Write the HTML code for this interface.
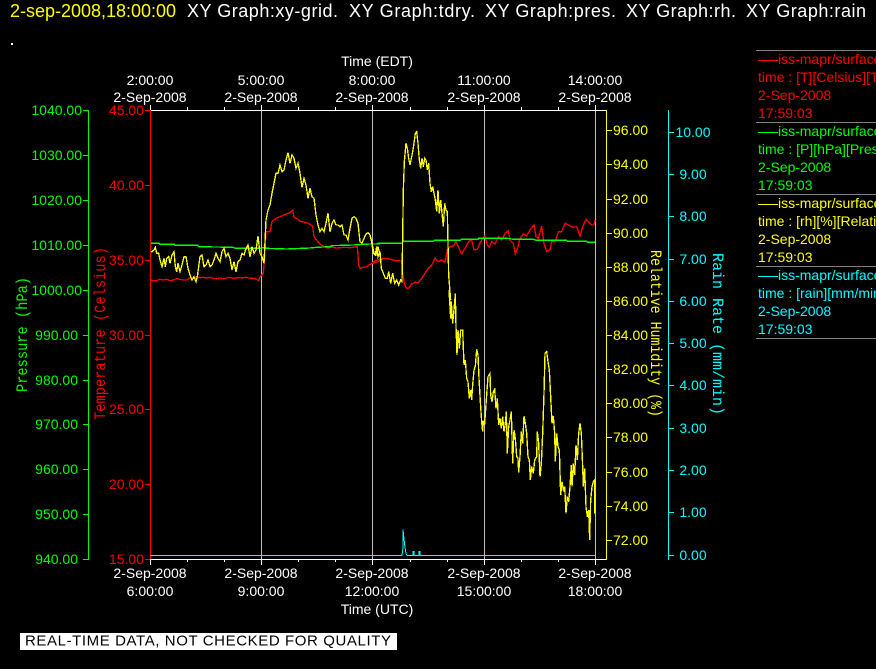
<!DOCTYPE html>
<html>
<head>
<meta charset="utf-8">
<style>
html,body{margin:0;padding:0;background:#000;width:876px;height:669px;overflow:hidden}
svg{display:block;position:absolute;left:0;top:0}
text{font-family:"Liberation Sans",sans-serif;font-size:14px}
.m{text-anchor:middle}.e{text-anchor:end}
.mono{font-family:"Liberation Mono",monospace;font-size:16px}
line,rect{shape-rendering:crispEdges}
polyline{shape-rendering:crispEdges;fill:none}
</style>
</head>
<body>
<svg width="876" height="669" viewBox="0 0 876 669" xmlns="http://www.w3.org/2000/svg">
<rect width="876" height="669" fill="#000"/>

<!-- title -->
<g>
<text x="10" y="17" fill="#ffff00" style="font-size:18px" textLength="166">2-sep-2008,18:00:00</text>
<text x="187" y="17" fill="#fff" style="font-size:18px" textLength="151">XY Graph:xy-grid.</text>
<text x="349" y="17" fill="#fff" style="font-size:18px" textLength="126">XY Graph:tdry.</text>
<text x="485" y="17" fill="#fff" style="font-size:18px" textLength="131">XY Graph:pres.</text>
<text x="626" y="17" fill="#fff" style="font-size:18px" textLength="110">XY Graph:rh.</text>
<text x="746" y="17" fill="#fff" style="font-size:18px" textLength="120">XY Graph:rain</text>
</g>
<rect x="11" y="43" width="2" height="2" fill="#fff"/>

<!-- grid -->
<g stroke="#c0c0c0" stroke-width="1">
<line x1="261.5" y1="110" x2="261.5" y2="559"/>
<line x1="372.5" y1="110" x2="372.5" y2="559"/>
<line x1="484.5" y1="110" x2="484.5" y2="559"/>
<line x1="595.5" y1="110" x2="595.5" y2="559"/>
</g>

<!-- white frame and time ticks -->
<g stroke="#fff" stroke-width="1">
<line x1="150" y1="110.5" x2="606" y2="110.5"/>
<line x1="150" y1="559.5" x2="606" y2="559.5"/>
<line x1="150.5" y1="105" x2="150.5" y2="110"/><line x1="187.5" y1="107" x2="187.5" y2="110"/><line x1="224.5" y1="107" x2="224.5" y2="110"/>
<line x1="261.5" y1="105" x2="261.5" y2="110"/><line x1="298.5" y1="107" x2="298.5" y2="110"/><line x1="335.5" y1="107" x2="335.5" y2="110"/>
<line x1="372.5" y1="105" x2="372.5" y2="110"/><line x1="410.5" y1="107" x2="410.5" y2="110"/><line x1="447.5" y1="107" x2="447.5" y2="110"/>
<line x1="484.5" y1="105" x2="484.5" y2="110"/><line x1="521.5" y1="107" x2="521.5" y2="110"/><line x1="558.5" y1="107" x2="558.5" y2="110"/>
<line x1="595.5" y1="105" x2="595.5" y2="110"/>
<line x1="150.5" y1="560" x2="150.5" y2="565"/><line x1="187.5" y1="560" x2="187.5" y2="562"/><line x1="224.5" y1="560" x2="224.5" y2="562"/>
<line x1="261.5" y1="560" x2="261.5" y2="565"/><line x1="298.5" y1="560" x2="298.5" y2="562"/><line x1="335.5" y1="560" x2="335.5" y2="562"/>
<line x1="372.5" y1="560" x2="372.5" y2="565"/><line x1="410.5" y1="560" x2="410.5" y2="562"/><line x1="447.5" y1="560" x2="447.5" y2="562"/>
<line x1="484.5" y1="560" x2="484.5" y2="565"/><line x1="521.5" y1="560" x2="521.5" y2="562"/><line x1="558.5" y1="560" x2="558.5" y2="562"/>
<line x1="595.5" y1="560" x2="595.5" y2="565"/>
</g>

<!-- time labels -->
<g fill="#fff">
<text class="m" x="377" y="66">Time (EDT)</text>
<text class="m" x="150" y="85">2:00:00</text><text class="m" x="261" y="85">5:00:00</text><text class="m" x="372" y="85">8:00:00</text><text class="m" x="484" y="85">11:00:00</text><text class="m" x="595" y="85">14:00:00</text>
<text class="m" x="150" y="102">2-Sep-2008</text><text class="m" x="261" y="102">2-Sep-2008</text><text class="m" x="372" y="102">2-Sep-2008</text><text class="m" x="484" y="102">2-Sep-2008</text><text class="m" x="595" y="102">2-Sep-2008</text>
<text class="m" x="150" y="578">2-Sep-2008</text><text class="m" x="261" y="578">2-Sep-2008</text><text class="m" x="372" y="578">2-Sep-2008</text><text class="m" x="484" y="578">2-Sep-2008</text><text class="m" x="595" y="578">2-Sep-2008</text>
<text class="m" x="150" y="596">6:00:00</text><text class="m" x="261" y="596">9:00:00</text><text class="m" x="372" y="596">12:00:00</text><text class="m" x="484" y="596">15:00:00</text><text class="m" x="595" y="596">18:00:00</text>
<text class="m" x="377" y="614">Time (UTC)</text>
</g>

<!-- green axis -->
<g stroke="#00ff00" stroke-width="1">
<line x1="88.5" y1="110" x2="88.5" y2="560"/>
<line x1="83" y1="110.5" x2="88" y2="110.5"/><line x1="83" y1="155.5" x2="88" y2="155.5"/><line x1="83" y1="200.5" x2="88" y2="200.5"/><line x1="83" y1="245.5" x2="88" y2="245.5"/><line x1="83" y1="290.5" x2="88" y2="290.5"/><line x1="83" y1="335.5" x2="88" y2="335.5"/><line x1="83" y1="380.5" x2="88" y2="380.5"/><line x1="83" y1="424.5" x2="88" y2="424.5"/><line x1="83" y1="469.5" x2="88" y2="469.5"/><line x1="83" y1="514.5" x2="88" y2="514.5"/><line x1="83" y1="559.5" x2="88" y2="559.5"/>
</g>
<g fill="#00ff00">
<text class="e" x="82" y="115">1040.00</text><text class="e" x="82" y="160">1030.00</text><text class="e" x="82" y="205">1020.00</text><text class="e" x="82" y="250">1010.00</text><text class="e" x="82" y="295">1000.00</text><text class="e" x="78" y="340">990.00</text><text class="e" x="78" y="385">980.00</text><text class="e" x="78" y="429">970.00</text><text class="e" x="78" y="474">960.00</text><text class="e" x="78" y="519">950.00</text><text class="e" x="78" y="564">940.00</text>
<text class="mono" transform="translate(27 392) rotate(-90)" textLength="115" lengthAdjust="spacingAndGlyphs">Pressure (hPa)</text>
</g>

<!-- red axis -->
<g stroke="#ff0000" stroke-width="1">
<line x1="150.5" y1="110" x2="150.5" y2="559"/>
<line x1="145" y1="110.5" x2="150" y2="110.5"/><line x1="145" y1="185.5" x2="150" y2="185.5"/><line x1="145" y1="260.5" x2="150" y2="260.5"/><line x1="145" y1="335.5" x2="150" y2="335.5"/><line x1="145" y1="409.5" x2="150" y2="409.5"/><line x1="145" y1="484.5" x2="150" y2="484.5"/><line x1="145" y1="559.5" x2="150" y2="559.5"/>
</g>
<g fill="#ff0000">
<text class="e" x="144" y="115">45.00</text><text class="e" x="144" y="190">40.00</text><text class="e" x="144" y="265">35.00</text><text class="e" x="144" y="340">30.00</text><text class="e" x="144" y="414">25.00</text><text class="e" x="144" y="489">20.00</text><text class="e" x="144" y="564">15.00</text>
<text class="mono" transform="translate(105 420) rotate(-90)" textLength="173" lengthAdjust="spacingAndGlyphs">Temperature (Celsius)</text>
</g>

<!-- yellow axis -->
<g stroke="#ffff00" stroke-width="1">
<line x1="606.5" y1="110" x2="606.5" y2="560"/>
<line x1="607" y1="130.5" x2="612" y2="130.5"/><line x1="607" y1="164.5" x2="612" y2="164.5"/><line x1="607" y1="199.5" x2="612" y2="199.5"/><line x1="607" y1="233.5" x2="612" y2="233.5"/><line x1="607" y1="267.5" x2="612" y2="267.5"/><line x1="607" y1="301.5" x2="612" y2="301.5"/><line x1="607" y1="335.5" x2="612" y2="335.5"/><line x1="607" y1="369.5" x2="612" y2="369.5"/><line x1="607" y1="403.5" x2="612" y2="403.5"/><line x1="607" y1="437.5" x2="612" y2="437.5"/><line x1="607" y1="472.5" x2="612" y2="472.5"/><line x1="607" y1="506.5" x2="612" y2="506.5"/><line x1="607" y1="540.5" x2="612" y2="540.5"/>
</g>
<g fill="#ffff00">
<text x="613" y="135">96.00</text><text x="613" y="169">94.00</text><text x="613" y="204">92.00</text><text x="613" y="238">90.00</text><text x="613" y="272">88.00</text><text x="613" y="306">86.00</text><text x="613" y="340">84.00</text><text x="613" y="374">82.00</text><text x="613" y="408">80.00</text><text x="613" y="442">78.00</text><text x="613" y="477">76.00</text><text x="613" y="511">74.00</text><text x="613" y="545">72.00</text>
<text class="mono" transform="translate(651 250) rotate(90)" textLength="167" lengthAdjust="spacingAndGlyphs">Relative Humidity (%)</text>
</g>

<!-- cyan axis -->
<g stroke="#00ffff" stroke-width="1">
<line x1="668.5" y1="110" x2="668.5" y2="560"/>
<line x1="669" y1="132.5" x2="674" y2="132.5"/><line x1="669" y1="174.5" x2="674" y2="174.5"/><line x1="669" y1="216.5" x2="674" y2="216.5"/><line x1="669" y1="259.5" x2="674" y2="259.5"/><line x1="669" y1="301.5" x2="674" y2="301.5"/><line x1="669" y1="343.5" x2="674" y2="343.5"/><line x1="669" y1="385.5" x2="674" y2="385.5"/><line x1="669" y1="428.5" x2="674" y2="428.5"/><line x1="669" y1="470.5" x2="674" y2="470.5"/><line x1="669" y1="512.5" x2="674" y2="512.5"/><line x1="669" y1="555.5" x2="674" y2="555.5"/>
</g>
<g fill="#00ffff">
<text class="m" x="693" y="137">10.00</text><text class="m" x="693" y="179">9.00</text><text class="m" x="693" y="221">8.00</text><text class="m" x="693" y="264">7.00</text><text class="m" x="693" y="306">6.00</text><text class="m" x="693" y="348">5.00</text><text class="m" x="693" y="390">4.00</text><text class="m" x="693" y="433">3.00</text><text class="m" x="693" y="475">2.00</text><text class="m" x="693" y="517">1.00</text><text class="m" x="693" y="560">0.00</text>
<text class="mono" transform="translate(713 253) rotate(90)" textLength="162" lengthAdjust="spacingAndGlyphs">Rain Rate (mm/min)</text>
</g>

<!-- red series -->
<polyline stroke="#ff0000" stroke-width="4" transform="translate(150 110) scale(.33333)" points="3,510 10,513 20,512 30,508 40,510 50,508 60,512 70,510 80,506 90,508 100,510 110,510 120,503 130,505 140,500 150,503 160,502 170,504 180,502 190,505 200,506 210,504 220,506 230,504 240,502 250,505 260,503 270,504 280,503 290,502 300,505 310,505 320,508 326,512 330,500 340,490 344,440 348,365 360,365 366,335 378,325 390,320 400,315 410,312 420,308 428,300 432,322 445,328 450,334 462,336 475,340 488,348 492,380 500,390 510,402 520,408 530,414 545,412 560,414 580,412 600,413 622,410 626,465 630,475 640,472 650,470 660,463 675,458 690,452"/>
<polyline stroke="#ff0000" stroke-width="4" transform="translate(370 110) scale(.33333)" points="0,465 10,455 30,447 45,445 60,447 75,452 95,453 98,490 104,525 110,535 115,535 125,522 135,517 145,518 155,505 165,490 175,475 185,465 195,445 205,455 215,450 225,457 232,420 240,410 250,408 258,395 265,410 275,432 285,415 295,395 305,390 312,420 322,418 332,395 345,377 352,405 358,412 365,395 375,402 385,380 395,390 405,370 415,362 420,390 430,400 436,432 444,410 450,385 460,372 470,378 480,360 492,345 498,380 505,385 515,348 522,400 530,425 540,420 545,395 555,395 565,365 575,365 585,340 595,345 610,352 620,350 630,378 638,350 648,328 655,335 665,345 672,345 675,330"/>

<!-- green series -->
<polyline stroke="#00ff00" stroke-width="4" transform="translate(150 110) scale(.33333)" points="3,400 28,400 30,403 72,403 75,406 143,406 146,410 250,412 255,415 330,415 345,412 350,415 410,417 480,414 500,412 540,410 545,407 610,405 660,402 690,402"/>
<polyline stroke="#00ff00" stroke-width="4" transform="translate(370 110) scale(.33333)" points="0,402 20,402 24,400 96,400 100,394 190,394 193,391 270,391 274,388 324,388 326,385 412,385 430,388 490,388 500,391 590,391 592,394 650,394 652,397 675,397"/>

<!-- yellow series -->
<polyline stroke="#ffff00" stroke-width="4" transform="translate(150 110) scale(.33333)" points="3,425 6,425 12,420 16,412 20,430 26,430 30,450 36,470 42,445 46,470 50,445 56,440 60,460 66,435 72,425 76,470 80,485 84,460 90,485 96,465 102,440 108,440 114,475 120,495 126,510 132,500 138,515 142,500 150,440 156,435 162,470 168,465 174,450 180,470 186,465 192,450 198,430 204,445 210,455 216,425 222,415 228,440 234,430 240,445 246,480 252,455 258,485 264,455 270,450 276,430 282,435 288,415 294,405 300,440 306,410 312,430 318,420 324,378 330,430 336,440 342,460 348,330 354,300 360,285 366,250 372,220 378,190 384,190 390,165 396,185 402,180 408,150 414,128 420,160 426,135 432,145 438,175 444,160 450,190 456,232 462,205 468,225 474,265 480,235 486,260 492,265 498,315 504,345 510,365 516,355 522,365 528,340 534,310 540,365 546,340 552,330 558,345 564,345 570,350 576,345 582,375 588,375 594,390 600,355 606,325 612,320 618,325 624,340 630,395 636,400 642,385 648,372 654,368 660,375 666,400 672,430 678,435 684,410 690,435"/>
<polyline stroke="#ffff00" stroke-width="4" transform="translate(370 110) scale(.33333)" points="0,375 4,390 10,430 16,435 20,410 24,440 30,425 34,475 40,490 46,505 52,505 56,485 62,520 68,490 74,520 80,510 86,525 92,510 96,515 100,240 103,155 108,100 112,115 116,145 120,165 124,145 128,125 132,100 136,70 140,65 144,100 148,150 152,175 156,145 160,170 164,145 168,150 172,180 176,160 180,220 184,245 188,230 192,250 196,270 200,305 204,240 208,310 212,270 216,310 220,350 224,280 228,300 232,305 236,495 240,545 242,570"/>
<polyline stroke="#ffff00" stroke-width="4" transform="translate(430 290) scale(.33333)" points="57,0 62,85 64,35 68,100 72,60 76,10 78,110 81,195 84,120 88,175 92,120 98,120 102,225 106,210 110,265 114,275 118,325 122,300 125,330 128,285 132,240 136,228 140,178 144,195 147,265 151,335 155,395 158,425 160,395 164,400 170,315 174,260 180,250 182,315 186,335 190,305 194,298 198,355 202,325 206,405 210,385 214,415 218,380 222,425 226,400 229,365 232,490 236,410 240,390 244,365 248,520 252,420 256,445 260,500 264,505 266,548 270,500 274,425 278,460 282,378 286,400 290,430 294,500 298,510 301,570 305,530 310,550 314,510 320,500 322,425 326,460 330,560 334,520 338,430 342,310 345,190 350,185 354,215 358,240 362,320 366,400 370,378 374,430 376,515 380,430 384,470 388,480 392,615 396,575 400,600 404,590 408,670 412,620 416,635 420,590 424,525 426,590 430,520 434,555 438,465 442,510 446,430 450,400 454,430 458,530 460,590 464,535 468,650 472,680 476,660 479,750 482,630 486,590 490,575 494,570 494,670"/>

<!-- cyan series -->
<polyline stroke="#00ffff" stroke-width="1" transform="translate(0 .5)" points="150,555 402,555 403,547 403,529 404,538 405,547 406,553 407,555 413,555 413,551 414,551 414,555 419,555 419,551 420,551 420,555 595,555"/>

<!-- legend -->
<g stroke="#808080" stroke-width="1">
<line x1="756" y1="50.5" x2="876" y2="50.5"/><line x1="756" y1="122.5" x2="876" y2="122.5"/><line x1="756" y1="194.5" x2="876" y2="194.5"/><line x1="756" y1="266.5" x2="876" y2="266.5"/><line x1="756" y1="338.5" x2="876" y2="338.5"/>
</g>
<g fill="#ff0000"><rect x="758" y="60" width="20" height="1"/>
<text x="778" y="64">iss-mapr/surface</text><text x="758" y="82">time : [T][Celsius][T]</text><text x="758" y="100">2-Sep-2008</text><text x="758" y="118">17:59:03</text></g>
<g fill="#00ff00"><rect x="758" y="132" width="20" height="1"/>
<text x="778" y="136">iss-mapr/surface</text><text x="758" y="154">time : [P][hPa][Pressure]</text><text x="758" y="172">2-Sep-2008</text><text x="758" y="190">17:59:03</text></g>
<g fill="#ffff00"><rect x="758" y="204" width="20" height="1"/>
<text x="778" y="208">iss-mapr/surface</text><text x="758" y="226">time : [rh][%][Relative]</text><text x="758" y="244">2-Sep-2008</text><text x="758" y="262">17:59:03</text></g>
<g fill="#00ffff"><rect x="758" y="276" width="20" height="1"/>
<text x="778" y="280">iss-mapr/surface</text><text x="758" y="298">time : [rain][mm/min]</text><text x="758" y="316">2-Sep-2008</text><text x="758" y="334">17:59:03</text></g>

<!-- footer -->
<rect x="20" y="633" width="377" height="17" fill="#fff"/>
<text x="25" y="645.5" fill="#000" style="font-size:15px" textLength="366" lengthAdjust="spacing">REAL-TIME DATA, NOT CHECKED FOR QUALITY</text>
</svg>
</body>
</html>
